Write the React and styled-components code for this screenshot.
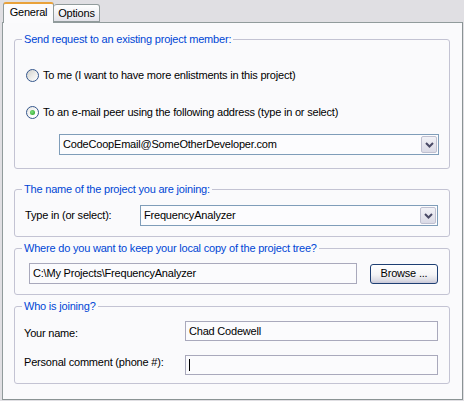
import React from "react";
import styled, { createGlobalStyle } from "styled-components";

const Global = createGlobalStyle`
  html, body { margin: 0; padding: 0; background: #E0DFE3; }
  body { font-family: "Liberation Sans", Arial, sans-serif; font-size: 11px; color: #000; letter-spacing: -0.2px; }
  * { box-sizing: border-box; }
`;

const Window = styled.div`
  width: 464px;
  height: 401px;
  padding: 2px 0 0 2px;
  background: #E0DFE3;
`;

const TabStrip = styled.div`
  display: flex;
  align-items: flex-start;
  height: 21px;
  margin-bottom: -1px;
  padding-left: 1px;
  position: relative;
  z-index: 1;
`;

const Tab = styled.div`
  display: flex;
  align-items: center;
  justify-content: center;
  line-height: 13px;
  border: 1px solid #919B9C;
  border-radius: 3px 3px 0 0;
  ${(p) =>
    p.$active
      ? `
    width: 51px;
    height: 21px;
    background: #FBFBFD;
    border-bottom: none;
    border-top: 2px solid #E9A23B;
    padding-bottom: 2px;
  `
      : `
    width: 46px;
    height: 18px;
    margin-top: 2px;
    margin-left: 0;
    background: linear-gradient(#FFFFFF, #ECECF1 70%, #E2E2E9);
    border-left: none;
    padding-top: 1px;
  `}
`;

const Panel = styled.div`
  width: 461px;
  height: 378px;
  border: 1px solid #919B9C;
  border-right-color: #8A9394;
  border-bottom-color: #8A9394;
  background: #FAFAFC;
  padding: 10px 12px 0 11px;
  display: flex;
  flex-direction: column;
`;

const Group = styled.fieldset`
  margin: ${(p) => p.$mt || 0}px 0 0 0;
  padding: 0 11px ${(p) => p.$pb || 0}px 7px;
  border: 1px solid #C3C3D3;
  border-radius: 3px;
  min-width: 0;
  width: 436px;
`;

const Legend = styled.legend`
  padding: 0 2px;
  color: #0046D5;
  line-height: 13px;
  font-size: 11px;
`;

const RadioRow = styled.label`
  display: flex;
  align-items: center;
  height: 13px;
  margin-top: ${(p) => p.$mt}px;
  margin-left: 4px;
  gap: 4px;
  line-height: 13px;
`;

const RadioCircle = styled.span`
  width: 13px;
  height: 13px;
  border-radius: 50%;
  border: 1px solid #34568C;
  display: flex;
  align-items: center;
  justify-content: center;
  background: ${(p) =>
    p.$checked
      ? "linear-gradient(135deg, #E6E6E2, #FFFFFF 70%)"
      : "linear-gradient(135deg, #CFCFCB 0%, #EDEDEA 55%, #FFFFFF 100%)"};
  flex: none;
`;

const RadioDot = styled.span`
  width: 5px;
  height: 5px;
  border-radius: 50%;
  background: radial-gradient(circle at 40% 40%, #7FE07F, #1F9E1F);
`;

const Combo = styled.div`
  display: flex;
  align-items: center;
  height: 21px;
  width: ${(p) => p.$w}px;
  margin-left: ${(p) => p.$ml || 0}px;
  margin-top: ${(p) => p.$mt || 0}px;
  border: 1px solid #7F9DB9;
  background: #FCFCFE;
  padding: 1px;
`;

const ComboText = styled.span`
  flex: 1;
  padding-left: 2px;
  line-height: 17px;
`;

const DropButton = styled.span`
  width: 16px;
  height: 17px;
  border: 1px solid #BFC0D0;
  border-radius: 2px;
  background: linear-gradient(#F2F2F7, #DADAE6);
  display: flex;
  align-items: center;
  justify-content: center;
`;

const FieldRow = styled.div`
  display: flex;
  align-items: ${(p) => p.$align || "center"};
  margin-top: ${(p) => p.$mt || 0}px;
`;

const Label = styled.span`
  width: ${(p) => p.$w}px;
  margin-left: ${(p) => p.$ml || 0}px;
  margin-top: ${(p) => p.$lt || 0}px;
  line-height: 13px;
  flex: none;
`;

const TextBox = styled.div`
  display: flex;
  align-items: center;
  width: ${(p) => p.$w}px;
  height: ${(p) => p.$h || 20}px;
  margin-left: ${(p) => p.$ml || 0}px;
  border: 1px solid #A9A9BC;
  background: #FBFBFD;
  padding-left: 3px;
  line-height: 13px;
`;

const Caret = styled.span`
  width: 1px;
  height: 12px;
  background: #000;
`;

const Button = styled.button`
  width: 68px;
  height: 20px;
  margin-left: 13px;
  border: 1px solid #1E3F73;
  border-radius: 3px;
  background: linear-gradient(#FFFFFF 0%, #F4F4F6 55%, #DCDCE4 85%, #C9C8D8 100%);
  font-family: "Liberation Sans", Arial, sans-serif;
  font-size: 11px;
  letter-spacing: -0.2px;
  color: #000;
  padding: 0;
  line-height: 13px;
`;

function Arrow() {
  return (
    <svg width="9" height="6" viewBox="0 0 9 6">
      <path d="M1 1 L4.5 4.5 L8 1" fill="none" stroke="#4A4A66" strokeWidth="2" />
    </svg>
  );
}

function Radio({ checked, children, mt }) {
  return (
    <RadioRow $mt={mt}>
      <RadioCircle $checked={checked}>{checked && <RadioDot />}</RadioCircle>
      <span>{children}</span>
    </RadioRow>
  );
}

export default function App() {
  return (
    <>
      <Global />
      <Window>
        <TabStrip>
          <Tab $active>General</Tab>
          <Tab>Options</Tab>
        </TabStrip>
        <Panel>
          <Group $pb={13}>
            <Legend>Send request to an existing project member:</Legend>
            <Radio mt={23}>To me (I want to have more enlistments in this project)</Radio>
            <Radio checked mt={24}>
              To an e-mail peer using the following address (type in or select)
            </Radio>
            <Combo $w={380} $ml={37} $mt={15}>
              <ComboText>CodeCoopEmail@SomeOtherDeveloper.com</ComboText>
              <DropButton>
                <Arrow />
              </DropButton>
            </Combo>
          </Group>

          <Group $mt={14} $pb={10}>
            <Legend>The name of the project you are joining:</Legend>
            <FieldRow $mt={9}>
              <Label $w={115} $ml={3}>Type in (or select):</Label>
              <Combo $w={299}>
                <ComboText>FrequencyAnalyzer</ComboText>
                <DropButton>
                  <Arrow />
                </DropButton>
              </Combo>
            </FieldRow>
          </Group>

          <Group $mt={5} $pb={10}>
            <Legend>Where do you want to keep your local copy of the project tree?</Legend>
            <FieldRow $mt={8}>
              <TextBox $w={328} $h={21} $ml={7}>C:\My Projects\FrequencyAnalyzer</TextBox>
              <Button>Browse ...</Button>
            </FieldRow>
          </Group>

          <Group $mt={5} $pb={8}>
            <Legend>Who is joining?</Legend>
            <FieldRow $mt={8} $align="flex-start">
              <Label $w={161} $ml={2} $lt={6}>Your name:</Label>
              <TextBox $w={254}>Chad Codewell</TextBox>
            </FieldRow>
            <FieldRow $mt={14} $align="flex-start">
              <Label $w={161} $ml={2} $lt={1}>Personal comment (phone #):</Label>
              <TextBox $w={254}>
                <Caret />
              </TextBox>
            </FieldRow>
          </Group>
        </Panel>
      </Window>
    </>
  );
}
